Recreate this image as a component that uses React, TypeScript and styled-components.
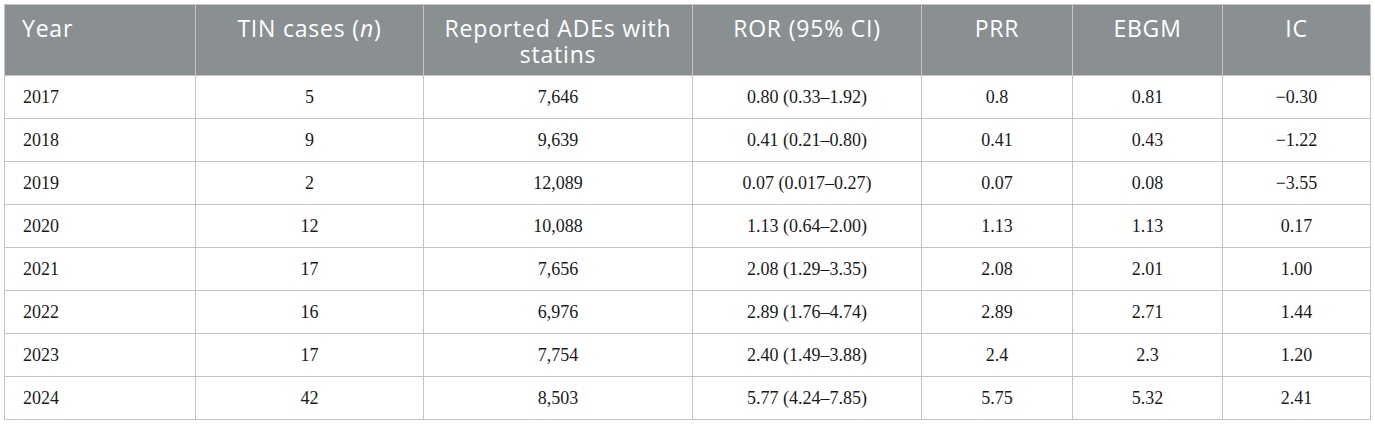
import React from 'react'
import styled, { createGlobalStyle } from 'styled-components'

const GlobalStyle = createGlobalStyle`
    body {
        margin: 0;
        background: #ffffff;
    }
`

interface Row {
    year: string
    cases: string
    ades: string
    ror: string
    prr: string
    ebgm: string
    ic: string
}

const rows: Row[] = [
    { year: '2017', cases: '5', ades: '7,646', ror: '0.80 (0.33–1.92)', prr: '0.8', ebgm: '0.81', ic: '−0.30' },
    { year: '2018', cases: '9', ades: '9,639', ror: '0.41 (0.21–0.80)', prr: '0.41', ebgm: '0.43', ic: '−1.22' },
    { year: '2019', cases: '2', ades: '12,089', ror: '0.07 (0.017–0.27)', prr: '0.07', ebgm: '0.08', ic: '−3.55' },
    { year: '2020', cases: '12', ades: '10,088', ror: '1.13 (0.64–2.00)', prr: '1.13', ebgm: '1.13', ic: '0.17' },
    { year: '2021', cases: '17', ades: '7,656', ror: '2.08 (1.29–3.35)', prr: '2.08', ebgm: '2.01', ic: '1.00' },
    { year: '2022', cases: '16', ades: '6,976', ror: '2.89 (1.76–4.74)', prr: '2.89', ebgm: '2.71', ic: '1.44' },
    { year: '2023', cases: '17', ades: '7,754', ror: '2.40 (1.49–3.88)', prr: '2.4', ebgm: '2.3', ic: '1.20' },
    { year: '2024', cases: '42', ades: '8,503', ror: '5.77 (4.24–7.85)', prr: '5.75', ebgm: '5.32', ic: '2.41' },
]

const widths = [191, 228, 269, 229, 151, 150, 148]

export default function App() {
    return (
        <Page>
            <GlobalStyle />
            <Table>
                <colgroup>
                    {widths.map((w, i) => (
                        <col key={i} style={{ width: w }} />
                    ))}
                </colgroup>
                <thead>
                    <tr>
                        <HeadCell $left>Year</HeadCell>
                        <HeadCell>
                            TIN cases (<i>n</i>)
                        </HeadCell>
                        <HeadCell>
                            Reported ADEs with
                            <br />
                            statins
                        </HeadCell>
                        <HeadCell>ROR (95% CI)</HeadCell>
                        <HeadCell>PRR</HeadCell>
                        <HeadCell>EBGM</HeadCell>
                        <HeadCell>IC</HeadCell>
                    </tr>
                </thead>
                <tbody>
                    {rows.map((r) => (
                        <tr key={r.year}>
                            <Cell $left>{r.year}</Cell>
                            <Cell>{r.cases}</Cell>
                            <Cell>{r.ades}</Cell>
                            <Cell>{r.ror}</Cell>
                            <Cell>{r.prr}</Cell>
                            <Cell>{r.ebgm}</Cell>
                            <Cell>{r.ic}</Cell>
                        </tr>
                    ))}
                </tbody>
            </Table>
        </Page>
    )
}

const Page = styled.div`
    padding: 4px;
`

const Table = styled.table`
    width: 1367px;
    table-layout: fixed;
    border-collapse: collapse;
    border: 1px solid #c4c4c4;
`

const HeadCell = styled.th<{ $left?: boolean }>`
    background: #8a9092;
    color: #ffffff;
    font-family: 'Open Sans', 'Noto Sans', sans-serif;
    font-weight: 400;
    font-size: 23px;
    letter-spacing: 0.8px;
    line-height: 26px;
    text-align: ${(p) => (p.$left ? 'left' : 'center')};
    vertical-align: top;
    padding: 10px 8px 8px ${(p) => (p.$left ? '17px' : '8px')};
    height: 52px;
    border: 1px solid #c4c4c4;
`

const Cell = styled.td<{ $left?: boolean }>`
    font-family: 'Liberation Serif', 'Times New Roman', serif;
    font-size: 18px;
    line-height: 22px;
    color: #1a1a1a;
    text-align: ${(p) => (p.$left ? 'left' : 'center')};
    padding: 10px 16px 10px ${(p) => (p.$left ? '18px' : '16px')};
    border: 1px solid #c4c4c4;
`
